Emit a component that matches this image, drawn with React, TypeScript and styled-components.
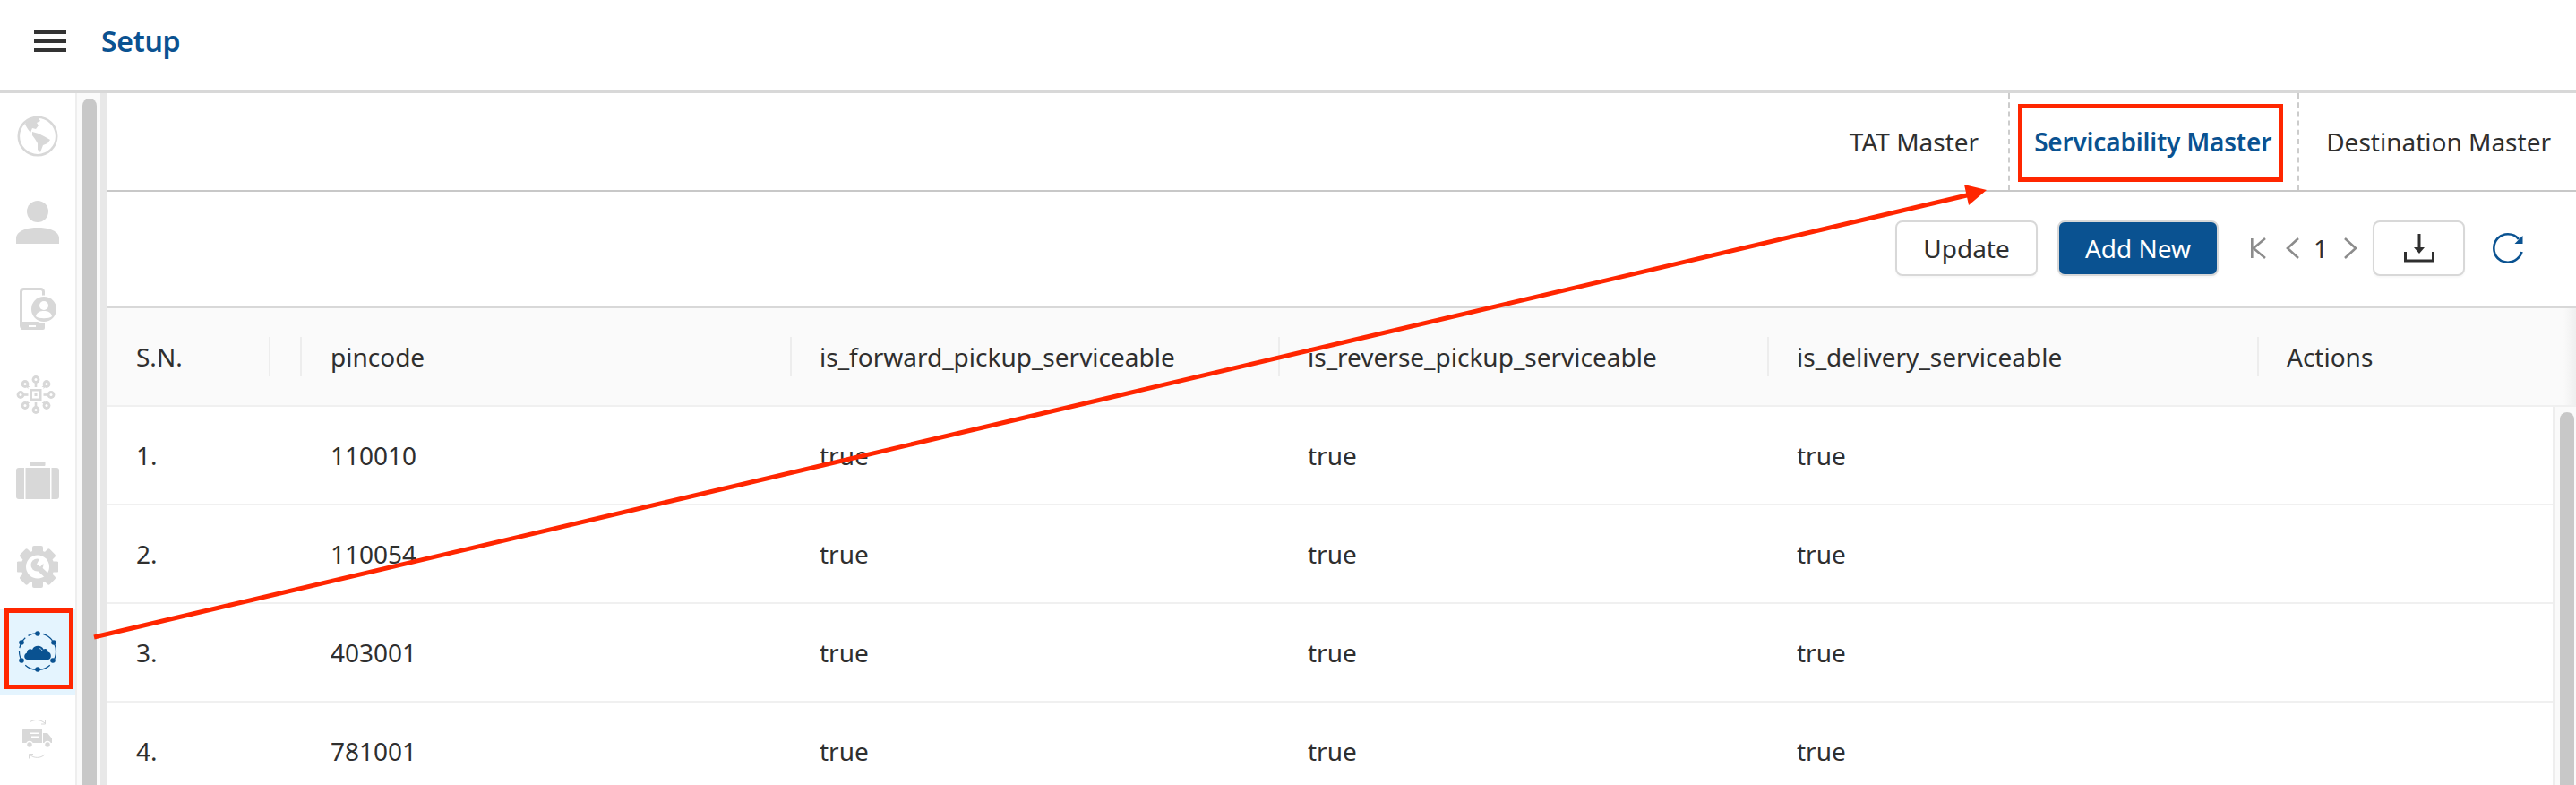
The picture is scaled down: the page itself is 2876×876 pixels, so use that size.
import React from 'react';
import styled, { createGlobalStyle } from 'styled-components';

const BRAND = '#0a5291';
const MUTED = '#d8d8d8';
const INK = '#2f2f2f';
const ALERT = '#ff2600';

const GlobalStyle = createGlobalStyle`
  html, body {
    margin: 0;
    padding: 0;
    background: #fff;
    overflow: hidden;
  }
  * {
    box-sizing: border-box;
  }
`;

const Page = styled.div`
  position: relative;
  width: 2876px;
  height: 876px;
  overflow: hidden;
  display: flex;
  flex-direction: column;
  background: #fff;
  color: ${INK};
  font-family: "Noto Sans", "Open Sans", sans-serif;
  font-size: 28px;
`;

const Header = styled.header`
  flex: none;
  height: 104px;
  display: flex;
  align-items: center;
  gap: 39px;
  padding: 0 0 8px 38px;
  border-bottom: 4px solid ${MUTED};
`;

const Burger = styled.div`
  width: 36px;
  height: 24px;
  border-top: 4px solid #333;
  border-bottom: 4px solid #333;
  display: flex;
  align-items: center;

  &::before {
    content: '';
    display: block;
    width: 100%;
    height: 4px;
    background: #333;
  }
`;

const PageTitle = styled.h1`
  margin: 0;
  font-size: 32px;
  line-height: 40px;
  font-weight: 600;
  letter-spacing: -0.3px;
  color: ${BRAND};
`;

const Body = styled.div`
  flex: 1;
  min-height: 0;
  display: flex;
`;

const Sidebar = styled.nav`
  flex: none;
  width: 84px;
  display: flex;
  flex-direction: column;
`;

const NavItem = styled.div<{ $active?: boolean }>`
  flex: none;
  height: 96px;
  display: flex;
  align-items: center;
  justify-content: center;
  background: ${p => (p.$active ? '#e4f4fe' : 'transparent')};
`;

const SideTrack = styled.div`
  flex: none;
  width: 36px;
  padding: 6px 4px 0 6px;
  background: #fafafa;
  border-left: 2px solid #eee;
  border-right: 8px solid #e8e8e8;
`;

const Thumb = styled.div`
  width: 16px;
  height: 100%;
  min-height: 900px;
  border-radius: 8px 8px 0 0;
  background: #c8c8c8;
`;

const Main = styled.main`
  flex: 1;
  min-width: 0;
  display: flex;
  flex-direction: column;
`;

const TabBar = styled.div`
  flex: none;
  height: 110px;
  display: flex;
  justify-content: flex-end;
  padding-right: 28px;
  border-bottom: 2px solid #c8c8c8;
`;

const Tab = styled.div<{ $active?: boolean; $divided?: boolean; $pad: string }>`
  display: flex;
  align-items: center;
  padding: ${p => p.$pad};
  font-weight: ${p => (p.$active ? 600 : 400)};
  letter-spacing: ${p => (p.$active ? '-0.2px' : '0')};
  color: ${p => (p.$active ? BRAND : INK)};
  border-left: ${p => (p.$divided ? '2px dashed #ccc' : 'none')};
`;

const Toolbar = styled.div`
  flex: none;
  height: 130px;
  display: flex;
  align-items: center;
  justify-content: flex-end;
  padding: 0 59px 2px 0;
  border-bottom: 2px solid ${MUTED};
`;

const Button = styled.div<{ $primary?: boolean; $w: number }>`
  width: ${p => p.$w}px;
  height: 62px;
  display: flex;
  align-items: center;
  justify-content: center;
  border-radius: 8px;
  border: 2px solid ${MUTED};
  background: ${p => (p.$primary ? BRAND : '#fff')};
  color: ${p => (p.$primary ? '#fff' : INK)};
  box-shadow: 0 2px 2px rgba(0, 0, 0, 0.03);
`;

const Actions = styled.div`
  display: flex;
  gap: 22px;
  margin-right: 36px;
`;

const Pager = styled.div`
  display: flex;
  align-items: center;
  margin-right: 17px;
`;

const PagerGlyph = styled.svg<{ $after?: number }>`
  display: block;
  margin-right: ${p => p.$after ?? 0}px;
`;

const PageNumber = styled.span`
  width: 10px;
  margin-right: 21px;
  display: flex;
  justify-content: center;
  color: ${INK};
`;

const RefreshSlot = styled.div`
  display: flex;
  margin-left: 31px;
`;

const Row = styled.div`
  display: grid;
  grid-template-columns: 182px 35px 547px 545px 546px 547px 1fr;
  align-items: center;
`;

const HeadRow = styled(Row)`
  flex: none;
  height: 110px;
  border-bottom: 2px solid #f0f0f0;
  background: linear-gradient(to right, #fafafa calc(100% - 14px), #efefef 100%);
`;

const HeadCell = styled.div`
  height: 44px;
  line-height: 44px;
  padding-left: 31px;
  white-space: nowrap;
  border-right: 2px solid #ededed;

  &:nth-child(-n + 3) {
    padding-left: 32px;
  }

  &:last-child {
    border-right: none;
  }
`;

const TableBody = styled.div`
  flex: 1;
  min-height: 0;
  display: flex;
`;

const Rows = styled.div`
  flex: 1;
  min-width: 0;
`;

const BodyRow = styled(Row)`
  height: 110px;
  border-bottom: 2px solid #f0f0f0;
`;

const Cell = styled.div`
  padding-left: 31px;
  white-space: nowrap;

  &:nth-child(-n + 3) {
    padding-left: 32px;
  }
`;

const BodyTrack = styled.div`
  flex: none;
  width: 26px;
  padding: 6px 2px 0 6px;
  background: #fafafa;
  border-left: 2px solid #eee;
`;

const Annotation = styled.svg`
  position: absolute;
  left: 0;
  top: 0;
  pointer-events: none;
`;

const GlobeIcon = () => (
  <svg width="46" height="46" viewBox="0 0 46 46" fill={MUTED}>
    <circle cx="23" cy="23" r="21.2" fill="none" stroke={MUTED} strokeWidth="2.6" />
    <path d="M10 7 L17 3 L24 3 L26 6 L22 8 L24 11 L21 15 L17 14 L15 19 L12 15 L9 10 Z" />
    <path d="M17 18 L24 20 L30 23 L37 27 L34 31 L29 33 L26 41 L23 38 L23 31 L20 26 L17 22 Z" />
  </svg>
);

const PersonIcon = () => (
  <svg width="48" height="48" viewBox="0 0 48 48" fill={MUTED}>
    <circle cx="24" cy="12" r="12" />
    <path d="M0 48 V42 C0 34 11 30 24 30 C37 30 48 34 48 42 V48 Z" />
  </svg>
);

const PhoneIcon = () => (
  <svg width="41" height="47" viewBox="0 0 41 47" fill={MUTED}>
    <rect x="1.5" y="1.5" width="25" height="44" rx="3" fill="none" stroke={MUTED} strokeWidth="3" />
    <rect x="1" y="38" width="27" height="9" rx="2" />
    <rect x="10" y="42" width="8" height="2" fill="#fff" />
    <circle cx="27" cy="24" r="15.5" fill="#fff" />
    <circle cx="27" cy="24" r="14" />
    <circle cx="27" cy="20" r="5" fill="#fff" />
    <path d="M18 32 C19 27 23 26 27 26 C31 26 35 27 36 32 C33 35 21 35 18 32 Z" fill="#fff" />
  </svg>
);

const hubNodes: [number, number][] = [
  [22, 4.5], [34, 9.5], [39, 21.5], [34, 33.5], [22, 38.5], [10, 33.5], [5, 21.5], [10, 9.5],
];

const HubIcon = () => (
  <svg width="48" height="43" viewBox="0 0 48 43" fill={MUTED} stroke={MUTED} strokeWidth="2.6">
    {hubNodes.map(([x, y]) => (
      <g key={`${x}-${y}`}>
        <line x1={22} y1={21.5} x2={x} y2={y} />
        <circle cx={x} cy={y} r="4.4" stroke="none" />
        <circle cx={x} cy={y} r="1.5" fill="#fff" stroke="none" />
      </g>
    ))}
    <rect x="13.5" y="13" width="17" height="17" fill="#fff" stroke="none" />
    <rect x="15.5" y="15" width="13" height="13" stroke="none" />
    <rect x="18" y="17.5" width="8" height="8" fill="#fff" stroke="none" />
    <rect x="20.5" y="20" width="3" height="3" stroke="none" />
  </svg>
);

const CaseIcon = () => (
  <svg width="48" height="42" viewBox="0 0 48 42" fill={MUTED}>
    <rect x="15.5" y="0" width="17" height="5" rx="1" />
    <rect x="0" y="7" width="48" height="35" rx="3" />
    <rect x="9" y="7" width="1.5" height="35" fill="#fff" />
    <rect x="38" y="7" width="1.5" height="35" fill="#fff" />
  </svg>
);

const GearIcon = () => (
  <svg width="46" height="47" viewBox="0 0 46 47" fill={MUTED}>
    {[0, 45, 90, 135, 180, 225, 270, 315].map(a => (
      <rect key={a} x="17" y="0" width="12" height="10" rx="2" transform={`rotate(${a} 23 23.5)`} />
    ))}
    <circle cx="23" cy="23.5" r="18.5" />
    <circle cx="23" cy="23.5" r="13" fill="#fff" />
    <path d="M22 23 L34 34" fill="none" stroke={MUTED} strokeWidth="6" />
    <circle cx="22.5" cy="21.5" r="7" />
    <path d="M22 20.5 L26 13 L32 17 L26 23.5 Z" fill="#fff" />
  </svg>
);

const cloudDots: [number, number][] = [
  [32, 11], [50, 21], [49, 41], [32, 51], [14, 41], [14, 21],
];

const CloudIcon = () => (
  <svg width="64" height="64" viewBox="0 0 64 64" fill={BRAND}>
    <circle cx="32" cy="31" r="20.5" fill="none" stroke={BRAND} strokeWidth="1.2" strokeDasharray="13 4" />
    {cloudDots.map(([x, y]) => (
      <circle key={`${x}-${y}`} cx={x} cy={y} r="2.8" />
    ))}
    <path d="M20.5 40 C16.5 40 16 34 20 32.5 C20 28.5 24 27.5 26 29 C28 23.5 36.5 23.5 38.5 28.5 C41 27 44 29 43.5 31.5 C48 32 48 40 43.5 40 Z" />
    <path d="M33 27.5 C35 27.5 36.5 28.5 37 30" fill="none" stroke="#cfe3f3" strokeWidth="0.9" />
  </svg>
);

const TruckIcon = () => (
  <svg width="36" height="48" viewBox="0 0 36 48" fill={MUTED}>
    <path d="M9 6 C14 2.5 21 2.5 26 7" fill="none" stroke={MUTED} strokeWidth="1" />
    <path d="M26.5 3 L26.5 8 L22 8" fill="none" stroke={MUTED} strokeWidth="1" />
    <path d="M1 15 C1 14 2 13 3 13 H23 V29 H1 Z" />
    <path d="M24 18 H29 L34 24 V29 H24 Z" />
    <rect x="9" y="17.5" width="11" height="1.5" fill="#fff" />
    <rect x="11" y="21.5" width="9" height="1.5" fill="#fff" />
    <circle cx="9" cy="31" r="3.5" stroke="#fff" strokeWidth="1.5" />
    <circle cx="29" cy="31" r="3.5" stroke="#fff" strokeWidth="1.5" />
    <path d="M26 42 C21 46.5 14 46.5 9 42" fill="none" stroke={MUTED} strokeWidth="1" />
    <path d="M8.5 46.5 L8.5 41.5 L13 41.5" fill="none" stroke={MUTED} strokeWidth="1" />
  </svg>
);

const PagerIcon = ({ d, width, after }: { d: string; width: number; after: number }) => (
  <PagerGlyph $after={after} width={width} height="24" viewBox={`0 0 ${width} 24`} fill="none" stroke="#8c8c8c" strokeWidth="2.6">
    <path d={d} />
  </PagerGlyph>
);

const DownloadIcon = () => (
  <svg width="34" height="32" viewBox="0 0 34 32" fill="none" stroke="#2f2f2f" strokeWidth="3">
    <path d="M17 0 V18" />
    <path d="M11 15 H23 L17 22 Z" fill="#2f2f2f" stroke="none" />
    <path d="M1.5 20 V30 H32.5 V20" />
  </svg>
);

const RefreshIcon = () => (
  <svg width="34" height="34" viewBox="0 0 34 34" fill="none" stroke={BRAND} strokeWidth="2.6">
    <path d="M29 7 C26 3 22 1.3 17 1.3 C8 1.3 1.3 8 1.3 17 C1.3 26 8 32.7 17 32.7 C25 32.7 31 27 32.5 21" />
    <path d="M33.5 3 V12 H24.5 Z" fill={BRAND} stroke="none" />
  </svg>
);

const navItems = [
  { key: 'globe', icon: <GlobeIcon /> },
  { key: 'person', icon: <PersonIcon /> },
  { key: 'phone', icon: <PhoneIcon /> },
  { key: 'hub', icon: <HubIcon /> },
  { key: 'case', icon: <CaseIcon /> },
  { key: 'gear', icon: <GearIcon /> },
  { key: 'cloud', icon: <CloudIcon />, active: true },
  { key: 'truck', icon: <TruckIcon /> },
];

const columns = [
  'S.N.',
  '',
  'pincode',
  'is_forward_pickup_serviceable',
  'is_reverse_pickup_serviceable',
  'is_delivery_serviceable',
  'Actions',
];

const rows = ['110010', '110054', '403001', '781001'];

export default function App() {
  return (
    <Page>
      <GlobalStyle />
      <Header>
        <Burger />
        <PageTitle>Setup</PageTitle>
      </Header>
      <Body>
        <Sidebar>
          {navItems.map(item => (
            <NavItem key={item.key} $active={item.active}>
              {item.icon}
            </NavItem>
          ))}
        </Sidebar>
        <SideTrack>
          <Thumb />
        </SideTrack>
        <Main>
          <TabBar>
            <Tab $pad="0 33px 0 0">TAT Master</Tab>
            <Tab $divided $active $pad="0 29px 0 27px">Servicability Master</Tab>
            <Tab $divided $pad="0 0 0 30px">Destination Master</Tab>
          </TabBar>
          <Toolbar>
            <Actions>
              <Button $w={159}>Update</Button>
              <Button $primary $w={180}>Add New</Button>
            </Actions>
            <Pager>
              <PagerIcon width={17} after={22} d="M1.3 1 V23 M16 1 L3 12 L16 23" />
              <PagerIcon width={15} after={19} d="M14 1 L2 12 L14 23" />
              <PageNumber>1</PageNumber>
              <PagerIcon width={15} after={0} d="M1 1 L13 12 L1 23" />
            </Pager>
            <Button $w={103}>
              <DownloadIcon />
            </Button>
            <RefreshSlot>
              <RefreshIcon />
            </RefreshSlot>
          </Toolbar>
          <HeadRow>
            {columns.map((label, i) => (
              <HeadCell key={i}>{label}</HeadCell>
            ))}
          </HeadRow>
          <TableBody>
            <Rows>
              {rows.map((pincode, i) => (
                <BodyRow key={pincode}>
                  <Cell>{i + 1}.</Cell>
                  <Cell />
                  <Cell>{pincode}</Cell>
                  <Cell>true</Cell>
                  <Cell>true</Cell>
                  <Cell>true</Cell>
                  <Cell />
                </BodyRow>
              ))}
            </Rows>
            <BodyTrack>
              <Thumb />
            </BodyTrack>
          </TableBody>
        </Main>
      </Body>
      <Annotation width="2876" height="876" viewBox="0 0 2876 876">
        <rect x="7.5" y="681.5" width="72" height="85" fill="none" stroke={ALERT} strokeWidth="5" />
        <rect x="2255.5" y="118.5" width="291" height="82" fill="none" stroke={ALERT} strokeWidth="5" />
        <line x1="105" y1="711" x2="2200" y2="217" stroke={ALERT} strokeWidth="5" />
        <polygon points="2218,212 2193,206 2198,229" fill={ALERT} />
      </Annotation>
    </Page>
  );
}
